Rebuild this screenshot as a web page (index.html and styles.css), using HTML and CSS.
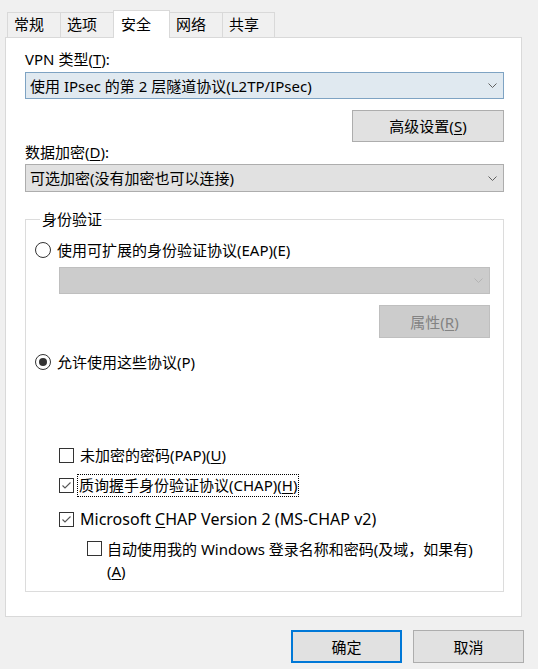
FILE: index.html
```html
<!DOCTYPE html>
<html lang="zh-CN">
<head>
<meta charset="utf-8">
<title>VPN 属性</title>
<link rel="stylesheet" href="styles.css">
</head>
<body>
<div class="dialog">
  <div class="tabs">
    <div class="tab t1">常规</div>
    <div class="tab t2">选项</div>
    <div class="tab t3 active">安全</div>
    <div class="tab t4">网络</div>
    <div class="tab t5">共享</div>
  </div>
  <div class="panel">
    <div class="label">VPN 类型(<u>T</u>):</div>
    <div class="combo combo-focus">
      <span class="combo-text">使用 IPsec 的第 2 层隧道协议(L2TP/IPsec)</span>
      <svg class="chev" width="9" height="5" viewBox="0 0 9 5"><polyline points="0.5,0.5 4.5,4.5 8.5,0.5" fill="none" stroke="#606060" stroke-width="1"/></svg>
    </div>
    <div class="btn-row">
      <div class="btn btn-adv">高级设置(<u>S</u>)</div>
    </div>
    <div class="label">数据加密(<u>D</u>):</div>
    <div class="combo combo-normal">
      <span class="combo-text">可选加密(没有加密也可以连接)</span>
      <svg class="chev" width="9" height="5" viewBox="0 0 9 5"><polyline points="0.5,0.5 4.5,4.5 8.5,0.5" fill="none" stroke="#606060" stroke-width="1"/></svg>
    </div>
    <fieldset class="group">
      <legend>身份验证</legend>
      <div class="radio-row r1">
        <span class="radio"></span>
        <span>使用可扩展的身份验证协议(EAP)(E)</span>
      </div>
      <div class="combo combo-disabled">
        <span class="combo-text"></span>
        <svg class="chev" width="9" height="5" viewBox="0 0 9 5"><polyline points="0.5,0.5 4.5,4.5 8.5,0.5" fill="none" stroke="#b4b4b4" stroke-width="1"/></svg>
      </div>
      <div class="btn-row btn-row-group">
        <div class="btn btn-disabled">属性(<u>R</u>)</div>
      </div>
      <div class="radio-row r2">
        <span class="radio checked"></span>
        <span>允许使用这些协议(P)</span>
      </div>
      <div class="check-row c1">
        <span class="check"></span>
        <span>未加密的密码(PAP)(<u>U</u>)</span>
      </div>
      <div class="check-row c2">
        <span class="check checked"><svg width="13" height="13" viewBox="0 0 13 13"><polyline points="2.5,6.5 5,9 10.5,3.5" fill="none" stroke="#555" stroke-width="1.1"/></svg></span>
        <span class="focus">质询握手身份验证协议(CHAP)(<u>H</u>)</span>
      </div>
      <div class="check-row c3">
        <span class="check checked"><svg width="13" height="13" viewBox="0 0 13 13"><polyline points="2.5,6.5 5,9 10.5,3.5" fill="none" stroke="#555" stroke-width="1.1"/></svg></span>
        <span class="latin">Microsoft <u>C</u>HAP Version 2 (MS-CHAP v2)</span>
      </div>
      <div class="check-row c4">
        <span class="check"></span>
        <span class="wrap-text">自动使用我的 Windows 登录名称和密码(及域，如果有)<br>(<u>A</u>)</span>
      </div>
    </fieldset>
  </div>
  <div class="footer">
    <div class="btn btn-ok">确定</div>
    <div class="btn btn-cancel">取消</div>
  </div>
</div>
</body>
</html>
```
FILE: styles.css
```css
html, body {
  margin: 0;
  padding: 0;
}
body {
  width: 538px;
  height: 669px;
  background: #f0f0f0;
  font-family: "Noto Sans", "Noto Sans CJK SC", sans-serif;
  font-size: 15px;
  line-height: 20px;
  color: #000;
  overflow: hidden;
}
u {
  text-decoration: underline;
  text-underline-offset: 2px;
  text-decoration-thickness: 1px;
}
.dialog {
  padding: 10px 0 0 5px;
}
.tabs {
  display: flex;
  align-items: flex-end;
  padding-left: 2px;
  height: 27px;
}
.tab {
  box-sizing: border-box;
  height: 25px;
  border: 1px solid #d9d9d9;
  border-bottom: none;
  border-right: none;
  background: #f0f0f0;
  padding-left: 6px;
  line-height: 22px;
}
.t1 { width: 53px; }
.t2 { width: 53px; }
.t3 { width: 57px; }
.t4 { width: 52px; }
.t5 { width: 53px; border-right: 1px solid #d9d9d9; }
.tab.active {
  height: 28px;
  background: #fff;
  border-right: 1px solid #d9d9d9;
  margin-bottom: -1px;
  position: relative;
  z-index: 1;
  line-height: 26px;
  padding-left: 7px;
}
.tab.active + .tab {
  border-left: none;
}
.panel {
  box-sizing: border-box;
  width: 517px;
  height: 580px;
  background: #fff;
  border: 1px solid #d9d9d9;
  padding: 11px 17px 0 19px;
}
.label {
  height: 20px;
}
.combo {
  box-sizing: border-box;
  display: flex;
  align-items: center;
  justify-content: space-between;
  border: 1px solid;
  padding: 0 6px 0 4px;
}
.combo-focus {
  margin-top: 3px;
  height: 27px;
  background: #e0e9f0;
  border-color: #7ea3c3;
}
.combo-normal {
  margin-top: 2px;
  height: 28px;
  background: #e1e1e1;
  border-color: #adadad;
}
.combo-disabled {
  margin-top: 7px;
  margin-left: 24px;
  height: 27px;
  background: #cccccc;
  border-color: #bfbfbf;
}
.combo-text {
  white-space: nowrap;
}
.chev {
  display: block;
}
.btn-row {
  display: flex;
  justify-content: flex-end;
  margin-top: 11px;
}
.btn {
  box-sizing: border-box;
  display: flex;
  align-items: center;
  justify-content: center;
  border: 1px solid #adadad;
  background: #e1e1e1;
}
.btn-adv {
  width: 152px;
  height: 32px;
}
.btn-disabled {
  width: 111px;
  height: 33px;
  background: #cccccc;
  border-color: #bfbfbf;
  color: #838383;
}
.group {
  margin: 17px 0 0 0;
  padding: 11px 13px 9px 9px;
  border: 1px solid #dcdcdc;
  min-width: 0;
}
.group legend {
  padding: 0 2px;
  margin-left: 5px;
  line-height: 20px;
}
.radio-row, .check-row {
  display: flex;
  align-items: center;
  height: 20px;
}
.radio {
  box-sizing: border-box;
  width: 16px;
  height: 16px;
  border: 1px solid #333;
  border-radius: 50%;
  margin-right: 6px;
  display: flex;
  align-items: center;
  justify-content: center;
  flex: none;
}
.radio.checked::after {
  content: "";
  width: 8px;
  height: 8px;
  border-radius: 50%;
  background: #333;
}
.r2 {
  margin-top: 14px;
}
.check-row {
  height: 22px;
  margin-left: 24px;
}
.check {
  box-sizing: border-box;
  width: 15px;
  height: 15px;
  border: 1px solid #333;
  margin-right: 6px;
  flex: none;
  display: flex;
  align-items: center;
  justify-content: center;
}
.check svg {
  display: block;
}
.latin {
  font-size: 16px;
}
.c1 { margin-top: 72px; }
.c2 { margin-top: 8px; }
.c3 { margin-top: 12px; }
.c4 {
  margin-top: 8px;
  margin-left: 52px;
  height: auto;
  align-items: flex-start;
  line-height: 22px;
}
.c4 .check {
  margin-top: 3px;
  margin-right: 5px;
}
.focus {
  outline: 1px dotted #000;
  outline-offset: 0;
  padding: 0 1px;
  margin-left: -2px;
  line-height: 21px;
}
.footer {
  display: flex;
  justify-content: flex-end;
  gap: 11px;
  padding-right: 14px;
  margin-top: 13px;
}
.btn-ok, .btn-cancel {
  width: 111px;
  height: 33px;
}
.btn-ok {
  border: 2px solid #0078d7;
}
```
